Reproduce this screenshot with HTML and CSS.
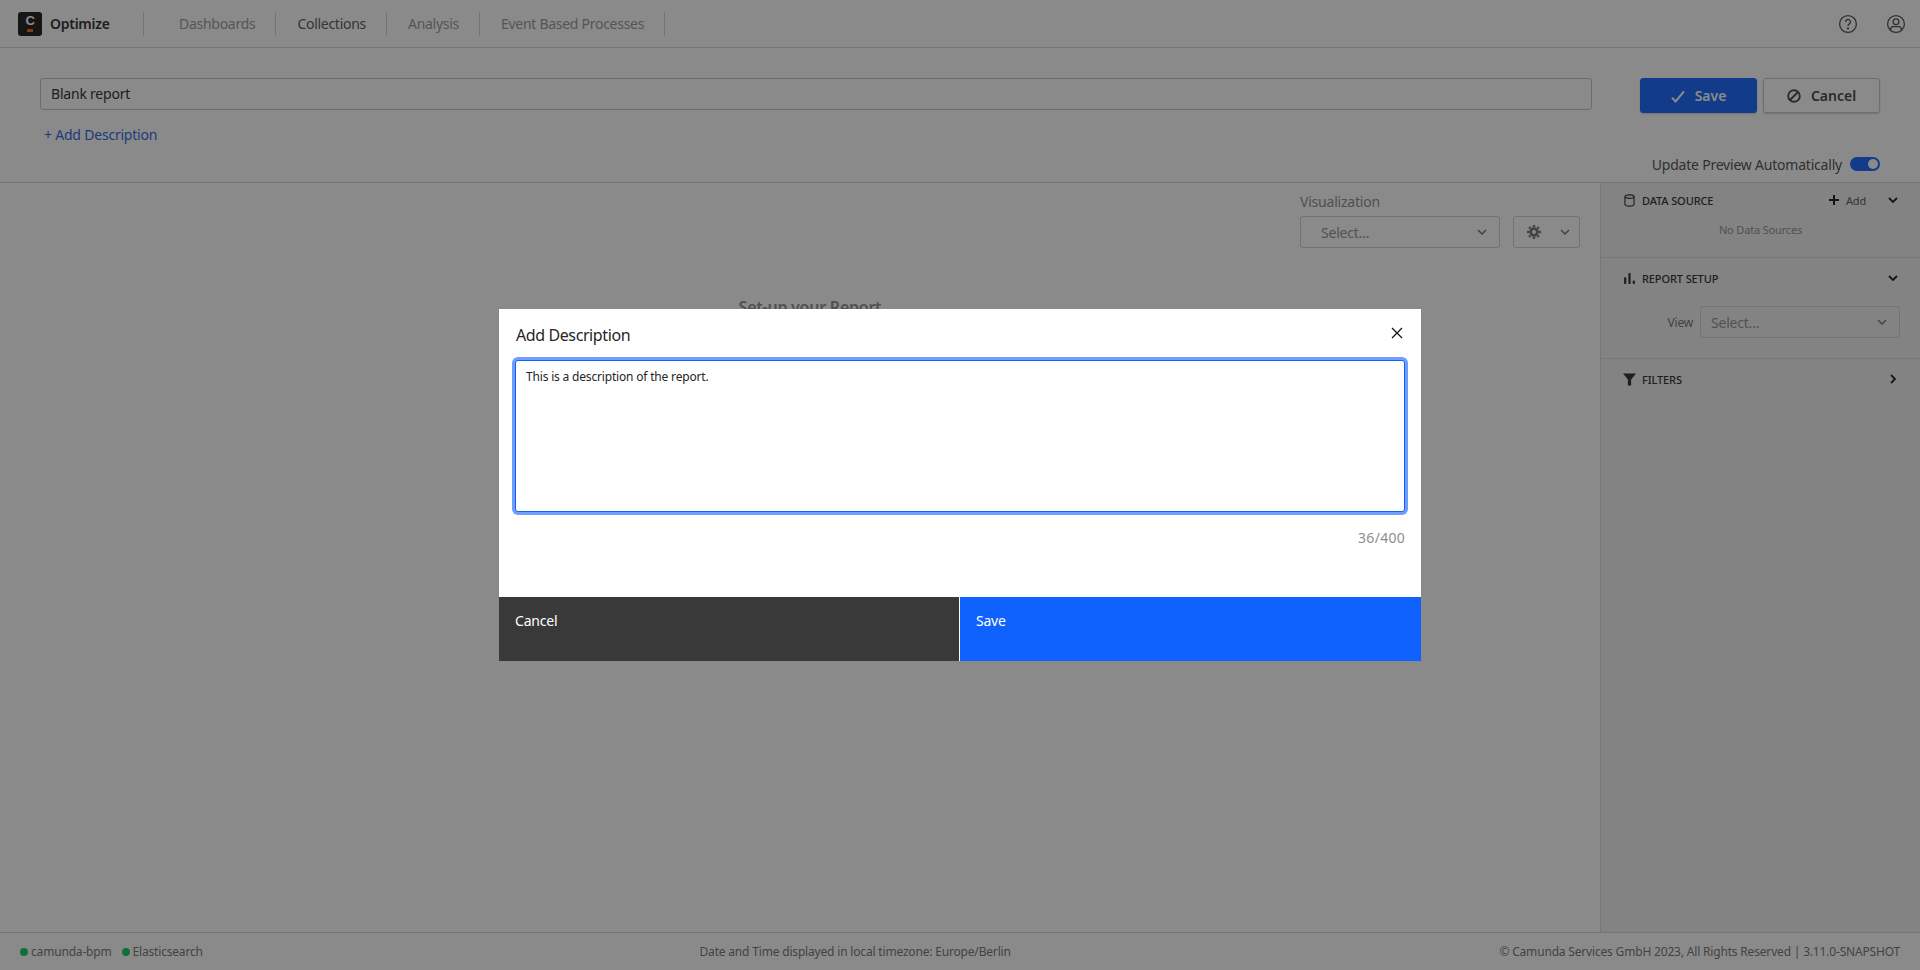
FILE: index.html
```html
<!DOCTYPE html>
<html lang="en">
<head>
    <meta charset="UTF-8">
    <title>Optimize</title>
    <link rel="stylesheet" href="styles.css">
</head>
<body>
    <header class="topbar">
        <div class="brand">
            <span class="brand-logo"><span class="brand-c">C</span><span class="brand-bar"></span></span>
            <span class="brand-name">Optimize</span>
        </div>
        <nav class="main-nav">
            <a class="nav-link">Dashboards</a>
            <a class="nav-link nav-active">Collections</a>
            <a class="nav-link">Analysis</a>
            <a class="nav-link">Event Based Processes</a>
        </nav>
        <div class="topbar-icons">
            <svg class="round-icon" viewBox="0 0 20 20" fill="none" stroke="currentColor" stroke-width="1.3">
                <circle cx="10" cy="10" r="8.4"/>
                <path d="M7.6 7.9a2.4 2.4 0 1 1 3.7 2c-.9.6-1.3 1-1.3 2"/>
                <circle cx="10" cy="14.4" r=".5" fill="currentColor"/>
            </svg>
            <svg class="round-icon" viewBox="0 0 20 20" fill="none" stroke="currentColor" stroke-width="1.3">
                <circle cx="10" cy="10" r="8.4"/>
                <circle cx="10" cy="7.8" r="2.9"/>
                <path d="M4.6 16.2v-.8c0-1.6 1.2-2.7 2.7-2.7h5.4c1.5 0 2.7 1.1 2.7 2.7v.8"/>
            </svg>
        </div>
    </header>

    <section class="report-head">
        <div class="report-title">
            <div class="name-input">Blank report</div>
            <a class="add-desc">+ Add Description</a>
        </div>
        <div class="report-actions">
            <a class="btn btn-primary">
                <svg class="btn-icon" viewBox="0 0 14 14" fill="none" stroke="currentColor" stroke-width="2"><path d="M1 8.600l3.600 3.800L13 2.400"/></svg>
                Save
            </a>
            <a class="btn">
                <svg class="btn-icon" viewBox="0 0 14 14" fill="none" stroke="currentColor" stroke-width="1.900"><circle cx="7" cy="7" r="5.800"/><path d="M3 11l8-8"/></svg>
                Cancel
            </a>
        </div>
        <div class="auto-preview">
            <span>Update Preview Automatically</span>
            <span class="toggle"><span class="toggle-knob"></span></span>
        </div>
    </section>

    <div class="report-body">
        <main class="report-main">
            <div class="toolbar">
                <div class="viz-field">
                    <label class="viz-label">Visualization</label>
                    <div class="select select-viz">
                        <span>Select...</span>
                        <svg class="chevron" viewBox="0 0 10 6"><path d="M1 1l4 4 4-4"/></svg>
                    </div>
                </div>
                <div class="select select-gear">
                    <svg class="gear" viewBox="0 0 16 16">
                        <circle cx="8" cy="8" r="3.400" fill="none" stroke="currentColor" stroke-width="2.800"/>
                        <path d="M8 8L8 1M8 8L13 3M8 8L15 8M8 8L13 13M8 8L8 15M8 8L3 13M8 8L1 8M8 8L3 3" stroke="currentColor" stroke-width="2.400" stroke-dasharray="0 5 2 9"/>
                    </svg>
                    <svg class="chevron" viewBox="0 0 10 6"><path d="M1 1l4 4 4-4"/></svg>
                </div>
            </div>
            <h2 class="setup-title">Set-up your Report</h2>
        </main>

        <aside class="sidebar">
            <section class="panel panel-source">
                <div class="panel-head">
                    <svg class="panel-icon" viewBox="0 0 12 14" fill="none" stroke="currentColor" stroke-width="1.200"><ellipse cx="6" cy="2.800" rx="4.900" ry="1.900"/><path d="M1.100 2.800v8.200c0 1.100 2.200 2 4.900 2s4.900-.9 4.900-2V2.800"/></svg>
                    <span class="panel-name">DATA SOURCE</span>
                    <span class="panel-add">
                        <svg class="plus" viewBox="0 0 10 10"><path d="M5 0v10M0 5h10"/></svg>
                        Add
                    </span>
                    <svg class="panel-chevron" viewBox="0 0 10 6"><path d="M1 1l4 4 4-4"/></svg>
                </div>
                <p class="no-sources">No Data Sources</p>
            </section>

            <section class="panel panel-setup">
                <div class="panel-head">
                    <svg class="panel-icon" viewBox="0 0 12 12" fill="currentColor"><rect x="1" y="5" width="2" height="6"/><rect x="5" y="1" width="2" height="10"/><rect x="9" y="8" width="2" height="3"/></svg>
                    <span class="panel-name">REPORT SETUP</span>
                    <svg class="panel-chevron" viewBox="0 0 10 6"><path d="M1 1l4 4 4-4"/></svg>
                </div>
                <div class="view-row">
                    <span class="view-label">View</span>
                    <div class="select select-view">
                        <span>Select...</span>
                        <svg class="chevron" viewBox="0 0 10 6"><path d="M1 1l4 4 4-4"/></svg>
                    </div>
                </div>
            </section>

            <section class="panel panel-filters">
                <div class="panel-head">
                    <svg class="panel-icon" viewBox="0 0 12 12" fill="currentColor"><path d="M0 .5h12L7.500 6v5.500h-3V6z"/></svg>
                    <span class="panel-name">FILTERS</span>
                    <svg class="panel-chevron" viewBox="0 0 6 10"><path d="M1 1l4 4-4 4"/></svg>
                </div>
            </section>
        </aside>
    </div>

    <footer class="footer">
        <div class="status-list">
            <span class="status"><i class="dot"></i>camunda-bpm</span>
            <span class="status"><i class="dot"></i>Elasticsearch</span>
        </div>
        <span class="timezone">Date and Time displayed in local timezone: Europe/Berlin</span>
        <span class="copyright">© Camunda Services GmbH 2023, All Rights Reserved | 3.11.0-SNAPSHOT</span>
    </footer>

    <!-- Add description modal -->
    <div class="overlay">
        <div class="modal">
            <div class="modal-head">
                <h3 class="modal-title">Add Description</h3>
                <svg class="modal-close" viewBox="0 0 12 12" fill="none" stroke="currentColor" stroke-width="1.300"><path d="M1 1l10 10M11 1L1 11"/></svg>
            </div>
            <div class="modal-body">
                <textarea class="desc-input" readonly>This is a description of the report.</textarea>
                <div class="char-count">36/400</div>
            </div>
            <div class="modal-buttons">
                <a class="modal-btn modal-cancel">Cancel</a>
                <a class="modal-btn modal-save">Save</a>
            </div>
        </div>
    </div>
</body>
</html>
```
FILE: styles.css
```css
* {
    margin: 0;
    padding: 0;
    box-sizing: border-box;
    letter-spacing: -.015em; /* Noto runs a little wide here */
}

html, body {
    height: 100%;
}

body {
    display: flex;
    flex-direction: column;
    font-family: "Noto Sans", "Liberation Sans", sans-serif;
    font-size: 14px;
    color: #262626;
    background: #fff;
    overflow: hidden;
}

/* Top bar */
.topbar {
    display: flex;
    align-items: center;
    height: 48px;
    flex-shrink: 0;
    border-bottom: 1px solid #d6d6d6;
}

.brand {
    display: flex;
    align-items: center;
    width: 144px;
    height: 24px;
    padding-left: 18px;
    border-right: 1px solid #d0d0d0;
}

.brand-logo {
    display: flex;
    flex-direction: column;
    align-items: center;
    width: 24px;
    height: 24px;
    border-radius: 3px;
    background: #161616;
    margin-right: 8px;
}

.brand-c {
    font-family: "Liberation Sans", sans-serif;
    font-size: 13px;
    font-weight: 700;
    line-height: 14px;
    margin-top: 2px;
    color: #fff;
}

.brand-bar {
    width: 6px;
    height: 3px;
    margin-top: 1px;
    background: #fc5d0d;
}

.brand-name {
    font-size: 14px;
    font-weight: 600;
    letter-spacing: -.02em;
}

.main-nav {
    display: flex;
    padding-left: 14px;
}

.nav-link {
    display: block;
    height: 24px;
    line-height: 24px;
    padding: 0 20px 0 21px;
    letter-spacing: -.02em;
    border-right: 1px solid #d0d0d0;
    color: #949494;
}

.nav-active {
    color: #525252;
}

.topbar-icons {
    display: flex;
    gap: 28px;
    margin-left: auto;
    padding-right: 14px;
    color: #4a4a4a;
}

.round-icon {
    width: 20px;
    height: 20px;
}

/* Report header */
.report-head {
    display: grid;
    grid-template-columns: 1fr auto;
    column-gap: 48px;
    height: 135px;
    flex-shrink: 0;
    padding: 30px 40px 0;
    border-bottom: 1px solid #d6d6d6;
}

.name-input {
    height: 32px;
    line-height: 30px;
    padding-left: 10px;
    border: 1px solid #c0c0c0;
    border-radius: 3px;
}

.add-desc {
    display: block;
    margin-top: 16px;
    padding-left: 4px;
    line-height: 18px;
    color: #1f5fe0;
}

.report-actions {
    display: flex;
    gap: 6px;
    height: 35px;
}

.btn {
    display: flex;
    align-items: center;
    justify-content: center;
    gap: 10px;
    width: 117px;
    height: 35px;
    font-weight: 600;
    letter-spacing: 0;
    color: #404040;
    border: 1px solid #c6c6c6;
    border-radius: 3px;
    box-shadow: 0 1px 2px rgba(0, 0, 0, .2);
}

.btn-primary {
    color: #fff;
    background: #0f62fe;
    border-color: #0f62fe;
}

.btn-icon {
    width: 14px;
    height: 14px;
}

.auto-preview {
    grid-column: 1 / 3;
    display: flex;
    align-items: center;
    justify-content: flex-end;
    gap: 8px;
    margin-top: 2px;
    height: 20px;
    color: #4a4a4a;
}

.toggle {
    display: block;
    width: 30px;
    height: 14px;
    padding: 2px 2px 2px 18px;
    border-radius: 7px;
    background: #0f62fe;
}

.toggle-knob {
    display: block;
    width: 10px;
    height: 10px;
    border-radius: 50%;
    background: #fff;
}

/* Main area */
.report-body {
    display: flex;
    flex: 1;
    min-height: 0;
}

.report-main {
    flex: 1;
    padding: 10px 20px 0;
}

.toolbar {
    display: flex;
    justify-content: flex-end;
    align-items: flex-end;
    gap: 13px;
}

.viz-label {
    display: block;
    line-height: 18px;
    margin-bottom: 5px;
    color: #8a8a8a;
}

.select {
    display: flex;
    align-items: center;
    height: 32px;
    border: 1px solid #d0d0d0;
    border-radius: 3px;
    color: #8d8d8d;
}

.select-viz {
    width: 200px;
    padding: 0 12px 0 20px;
    justify-content: space-between;
}

.select-gear {
    width: 67px;
    padding: 0 9px 0 12px;
    justify-content: space-between;
    color: #6f6f6f;
}

.select-view {
    width: 200px;
    padding: 0 12px 0 10px;
    justify-content: space-between;
}

.chevron {
    width: 10px;
    height: 6px;
    fill: none;
    stroke: #6f6f6f;
    stroke-width: 1.500;
}

.gear {
    width: 16px;
    height: 16px;
}

.setup-title {
    margin-top: 49px;
    margin-left: 20px;
    text-align: center;
    font-size: 16px;
    font-weight: 600;
    line-height: 20px;
    color: #8a8a8a;
}

/* Sidebar */
.sidebar {
    width: 320px;
    flex-shrink: 0;
    background: #f0f0f0;
    border-left: 1px solid #d6d6d6;
}

.panel {
    padding: 0 22px 0 22px;
    border-bottom: 1px solid #d6d6d6;
}

.panel-source {
    height: 75px;
}

.panel-setup {
    height: 101px;
}

.panel-filters {
    border-bottom: 0;
}

.panel-head {
    display: flex;
    align-items: center;
    height: 34px;
    color: #262626;
}

.panel-setup .panel-head, .panel-filters .panel-head {
    height: 40px;
}

.panel-icon {
    width: 13px;
    height: 13px;
    margin-right: 6px;
}

.panel-name {
    font-size: 11px;
    font-weight: 500;
    letter-spacing: -.01em;
}

.panel-add {
    display: flex;
    align-items: center;
    gap: 7px;
    margin-left: auto;
    font-size: 11px;
    color: #525252;
}

.plus {
    width: 10px;
    height: 10px;
    stroke: #161616;
    stroke-width: 2;
}

.panel-chevron {
    width: 10px;
    height: 6px;
    margin-left: 22px;
    fill: none;
    stroke: #161616;
    stroke-width: 1.800;
}

.panel-setup .panel-chevron {
    margin-left: auto;
}

.panel-filters .panel-chevron {
    width: 6px;
    height: 10px;
    margin-left: auto;
    margin-right: 2px;
}

.no-sources {
    margin-top: 5px;
    text-align: center;
    font-size: 11px;
    color: #8d8d8d;
}

.view-row {
    display: flex;
    align-items: center;
    justify-content: flex-end;
    gap: 7px;
    margin-top: 8px;
    margin-right: -2px;
    font-size: 12px;
    color: #6f6f6f;
}

.view-row .select-view {
    font-size: 14px;
}

/* Footer */
.footer {
    display: flex;
    justify-content: space-between;
    align-items: center;
    height: 38px;
    flex-shrink: 0;
    padding: 0 20px;
    font-size: 12px;
    color: #6f6f6f;
    border-top: 1px solid #d6d6d6;
}

.status-list {
    display: flex;
    gap: 10px;
}

.status {
    display: flex;
    align-items: center;
    gap: 3px;
}

.dot {
    width: 8px;
    height: 8px;
    border-radius: 50%;
    background: #10c95d;
}

.timezone {
    margin-left: 8px;
}

/* Modal */
.overlay {
    position: fixed;
    top: 0;
    left: 0;
    width: 100%;
    height: 100%;
    display: flex;
    align-items: center;
    justify-content: center;
    background: rgba(22, 22, 22, .5);
}

.modal {
    display: flex;
    flex-direction: column;
    width: 922px;
    height: 352px;
    background: #fff;
}

.modal-head {
    display: flex;
    justify-content: space-between;
    align-items: flex-start;
    height: 51px;
    padding: 16px 18px 0 17px;
}

.modal-title {
    font-size: 16px;
    font-weight: 400;
    letter-spacing: -.025em;
    line-height: 20px;
    color: #262626;
}

.modal-close {
    width: 12px;
    height: 12px;
    margin-top: 2px;
    color: #161616;
}

.modal-body {
    flex: 1;
    padding: 0 16px;
}

.desc-input {
    display: block;
    width: 100%;
    height: 152px;
    padding: 8px 10px;
    font-family: inherit;
    font-size: 12px;
    line-height: 16px;
    color: #262626;
    resize: none;
    outline: 0;
    border: 1px solid #0f62fe;
    border-radius: 3px;
    box-shadow: 0 0 0 3px #6f9eff;
}

.char-count {
    margin-top: 17px;
    text-align: right;
    line-height: 18px;
    letter-spacing: .02em;
    color: #8d8d8d;
}

.modal-buttons {
    display: flex;
    height: 64px;
    gap: 1px;
}

.modal-btn {
    flex: 1;
    padding: 15px 16px;
    line-height: 18px;
    color: #fff;
}

.modal-cancel {
    flex: 0 0 460px;
    background: #393939;
}

.modal-save {
    background: #0f62fe;
}
```
